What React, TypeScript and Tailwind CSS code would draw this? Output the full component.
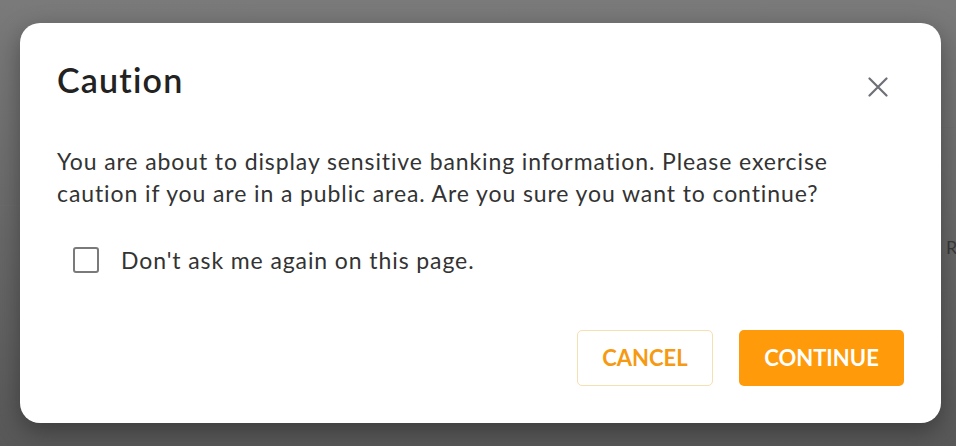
import { useState } from 'react'

/**
 * Caution dialog shown before revealing sensitive banking details.
 * The page behind is dimmed by the backdrop; only the modal is interactive.
 */
export default function App() {
  const [dontAsk, setDontAsk] = useState(false)

  return (
    <div
      className="relative h-[446px] w-[956px] overflow-hidden bg-gradient-to-b from-[#7a7a7a] to-[#585858] pl-[20px] pt-[23px]"
      style={{ fontFamily: 'Lato, "Open Sans", sans-serif' }}
    >
      {/* faint page content behind the backdrop */}
      <div className="absolute left-[941px] top-[127px] h-px w-[15px] bg-[#6e6e6e]" />
      <div className="absolute left-0 top-[205px] h-px w-[20px] bg-[#6c6c6c]" />
      <span className="absolute left-[946px] top-[234px] text-[18px] text-[#3a3a3a]">R</span>

      <div className="relative flex h-[400px] w-[921px] flex-col rounded-[20px] bg-white px-[37px] pb-[37px] pt-[37px] shadow-[0_8px_24px_rgba(0,0,0,0.35)]">
        <div className="flex items-start justify-between">
          <h2 className="text-[34px] font-semibold leading-[40px] tracking-[1.2px] text-[#222222]">Caution</h2>
          <button
            aria-label="Close"
            className="mr-[11px] mt-[12px] flex h-[30px] w-[30px] items-center justify-center text-[#6f6f78]"
          >
            <svg width="20" height="20" viewBox="0 0 20 20" fill="none" stroke="currentColor" strokeWidth="2.2" strokeLinecap="round">
              <path d="M1.5 1.5 18.5 18.5M18.5 1.5 1.5 18.5" />
            </svg>
          </button>
        </div>

        <p className="mt-[43px] text-[23px] leading-[32px] tracking-[0.9px] text-[#333333]">
          You are about to display sensitive banking information. Please exercise
          <br />
          caution if you are in a public area. Are you sure you want to continue?
        </p>

        <label className="mt-[35px] flex cursor-pointer items-center gap-[22px] pl-4">
          <input
            type="checkbox"
            checked={dontAsk}
            onChange={(e) => setDontAsk(e.target.checked)}
            className="peer sr-only"
          />
          <span className="h-[26px] w-[26px] rounded-[3px] border-2 border-[#7a7a7a] bg-white" />
          <span className="text-[23px] leading-[32px] tracking-[0.9px] text-[#333333]">Don't ask me again on this page.</span>
        </label>

        <div className="mt-auto flex justify-end gap-[26px]">
          <button className="h-[56px] w-[136px] rounded-[5px] border border-[#f6dfb0] bg-white pb-[2px] text-[22px] font-bold text-[#f59a12]">
            CANCEL
          </button>
          <button className="h-[56px] w-[165px] rounded-[5px] bg-[#ff9a0a] pb-[2px] text-[22px] font-bold text-white">
            CONTINUE
          </button>
        </div>
      </div>
    </div>
  )
}
